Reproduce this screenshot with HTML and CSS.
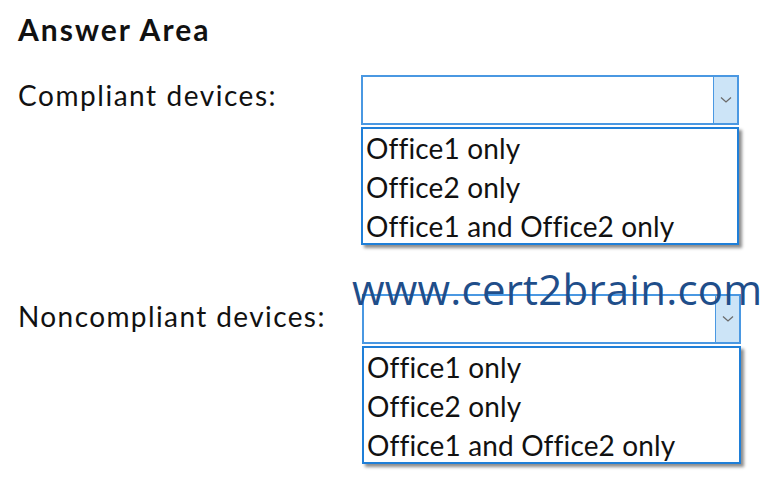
FILE: index.html
```html
<!DOCTYPE html>
<html>
<head>
<meta charset="utf-8">
<link rel="stylesheet" href="styles.css">
</head>
<body>
<main class="answer">
  <h1 class="title">Answer Area</h1>
  <div class="row row-first">
    <div class="label">Compliant devices:</div>
    <div class="dropdown">
      <div class="select"><span class="btn"><svg width="12" height="8" viewBox="0 0 12 8"><path d="M1 1.5 L6 6 L11 1.5" fill="none" stroke="#6b6b6b" stroke-width="1.3"/></svg></span></div>
      <ul class="list">
        <li>Office1 only</li>
        <li>Office2 only</li>
        <li>Office1 and Office2 only</li>
      </ul>
    </div>
  </div>
  <div class="row row-second">
    <div class="label">Noncompliant devices:</div>
    <div class="dropdown">
      <div class="select"><span class="btn"><svg width="12" height="8" viewBox="0 0 12 8"><path d="M1 1.5 L6 6 L11 1.5" fill="none" stroke="#6b6b6b" stroke-width="1.3"/></svg></span></div>
      <ul class="list">
        <li>Office1 only</li>
        <li>Office2 only</li>
        <li>Office1 and Office2 only</li>
      </ul>
    </div>
  </div>
  <div class="watermark">www.cert2brain.com</div>
</main>
</body>
</html>
```
FILE: styles.css
```css
html, body {
  margin: 0;
  padding: 0;
  background: #ffffff;
}
.answer {
  position: relative;
  width: 774px;
  height: 490px;
  padding: 0 0 0 18px;
  box-sizing: border-box;
  font-family: Lato, "Open Sans", sans-serif;
  color: #111111;
}
.title {
  margin: 0;
  padding-top: 11px;
  font-size: 30px;
  line-height: 36px;
  font-weight: 700;
  letter-spacing: 2px;
}
.row {
  display: grid;
  grid-template-columns: 343px 378px;
}
.row-first {
  margin-top: 28px;
}
.row-second {
  margin-top: 49px;
  grid-template-columns: 344px 379px;
}
.label {
  font-size: 28px;
  line-height: 34px;
  letter-spacing: 1.55px;
}
.row-first .label {
  padding-top: 3px;
}
.row-second .label {
  padding-top: 5px;
  letter-spacing: 1.4px;
}
.dropdown {
  display: flex;
  flex-direction: column;
  gap: 2px;
}
.select {
  height: 50px;
  box-sizing: border-box;
  border: 2px solid #4a98e2;
  display: flex;
  justify-content: flex-end;
  background: #fff;
}
.btn {
  width: 23px;
  background: #cce4f7;
  border-left: 1px solid #4a98e2;
  display: flex;
  align-items: center;
  justify-content: center;
}
.list {
  margin: 0;
  padding: 0 0 0 3px;
  list-style: none;
  height: 118px;
  box-sizing: border-box;
  border: 2px solid #1f7fd8;
  box-shadow: 3px 3px 3px rgba(0, 0, 0, 0.45);
  font-size: 28px;
  line-height: 39px;
  letter-spacing: 0.15px;
}
.watermark {
  position: absolute;
  left: 352px;
  top: 264px;
  font-family: "Open Sans", sans-serif;
  font-size: 42px;
  line-height: 50px;
  letter-spacing: 0.22px;
  color: #1f4e8a;
}
```
